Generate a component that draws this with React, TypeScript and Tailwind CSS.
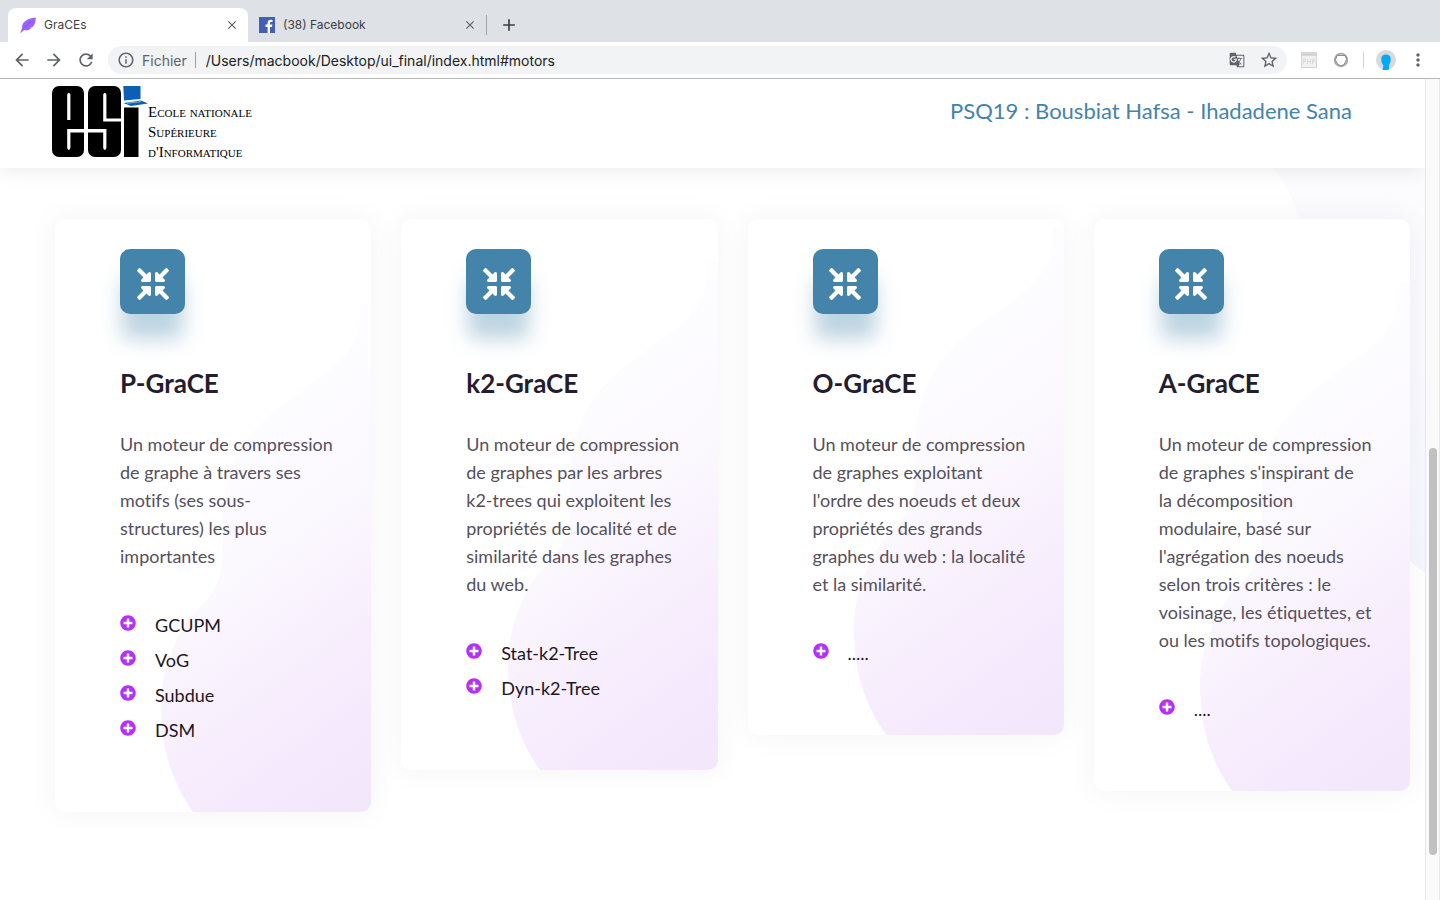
import React from "react";
import { FaCompressArrowsAlt, FaPlusCircle } from "react-icons/fa";
import { MdArrowBack, MdArrowForward, MdRefresh, MdClose, MdAdd, MdInfoOutline, MdStarBorder, MdMoreVert, MdGTranslate } from "react-icons/md";

type Engine = { title: string; lines: string[]; items: string[] };

const engines: Engine[] = [
  {
    title: "P-GraCE",
    lines: ["Un moteur de compression", "de graphe à travers ses", "motifs (ses sous-", "structures) les plus", "importantes"],
    items: ["GCUPM", "VoG", "Subdue", "DSM"],
  },
  {
    title: "k2-GraCE",
    lines: ["Un moteur de compression", "de graphes par les arbres", "k2-trees qui exploitent les", "propriétés de localité et de", "similarité dans les graphes", "du web."],
    items: ["Stat-k2-Tree", "Dyn-k2-Tree"],
  },
  {
    title: "O-GraCE",
    lines: ["Un moteur de compression", "de graphes exploitant", "l'ordre des noeuds et deux", "propriétés des grands", "graphes du web : la localité", "et la similarité."],
    items: ["....."],
  },
  {
    title: "A-GraCE",
    lines: ["Un moteur de compression", "de graphes s'inspirant de", "la décomposition", "modulaire, basé sur", "l'agrégation des noeuds", "selon trois critères : le", "voisinage, les étiquettes, et", "ou les motifs topologiques."],
    items: ["...."],
  },
];

function TabStrip() {
  return (
    <div className="flex h-[42px] items-end bg-[#dee1e6] pl-2 text-[12px] text-[#3c4043]">
      <div className="flex h-[34px] w-[240px] items-center rounded-t-lg bg-white pl-3 pr-2">
        <svg viewBox="0 0 16 16" className="size-4" aria-hidden="true">
          <path d="M.4 15.800C1.200 13.400 1.600 12.600 2.300 11.600C1 6.500 5 1.600 15.800.4C15.600 4.500 14.800 8 12.200 10.300L10 10.700L11 11.400C9 13.200 6.500 13.600 4 13L1.200 15.700z" fill="#9a63ff" />
          <path d="M2.500 12.500C5 9.500 7.500 7 11 4.800" fill="none" stroke="#7d45ec" strokeWidth=".8" />
        </svg>
        <span className="ml-2 flex-1">GraCEs</span>
        <button aria-label="Fermer GraCEs" className="grid size-4 place-items-center"><MdClose className="size-[14px] text-[#5f6368]" /></button>
      </div>
      <div className="flex h-[34px] w-[238px] items-center pl-[11px] pr-2">
        <svg viewBox="0 0 16 16" className="size-4" aria-hidden="true"><rect width="16" height="16" fill="#4460b5" /><path d="M11 16V10h2l.4-2.400H11V6.200c0-.8.3-1.200 1.200-1.200h1.300V2.900c-.4-.1-1-.2-1.700-.2-2 0-3.200 1.100-3.200 3.200v1.700H6.500V10h2.100v6z" fill="#fff" /></svg>
        <span className="ml-2 flex-1">(38) Facebook</span>
        <button aria-label="Fermer Facebook" className="grid size-4 place-items-center"><MdClose className="size-[14px] text-[#5f6368]" /></button>
      </div>
      <div className="flex h-[34px] items-center">
        <div className="h-5 w-px bg-[#a0a4a9]" />
        <button aria-label="Nouvel onglet" className="ml-3"><MdAdd className="size-5 text-[#3c4043]" /></button>
      </div>
    </div>
  );
}

function AddressBar() {
  return (
    <div className="flex h-[37px] items-center border-b border-[#b6b6b6] bg-white px-3 text-[#5f6368]">
      <button aria-label="Retour"><MdArrowBack className="size-5" /></button>
      <button aria-label="Avancer" className="ml-3"><MdArrowForward className="size-5" /></button>
      <button aria-label="Actualiser" className="ml-3"><MdRefresh className="size-5" /></button>
      <div className="ml-3 flex h-7 flex-1 items-center rounded-full bg-[#f1f3f4] px-2 text-[14px]">
        <MdInfoOutline className="mx-px size-[18px]" />
        <label htmlFor="url" className="ml-[6px]">Fichier</label>
        <span className="ml-2 mr-[10px] h-4 w-px bg-[#9aa0a6]" />
        <input id="url" defaultValue="/Users/macbook/Desktop/ui_final/index.html#motors" className="min-w-0 flex-1 bg-transparent text-[#202124] outline-none" />
        <button aria-label="Traduire"><MdGTranslate className="size-4" /></button>
        <button aria-label="Favori" className="ml-[14px]"><MdStarBorder className="size-5" /></button>
      </div>
      <svg viewBox="0 0 16 16" className="ml-[14px] size-4" aria-hidden="true"><rect x=".5" y=".5" width="15" height="15" fill="#f1f1f1" stroke="#d4d4d4" /><path d="M1 2.500h14" stroke="#cfcfcf" strokeWidth="2.500" /><path d="M2.500 12V7h2v2.500h-2M6.500 7v5M6.500 9.500h3M9.500 7v5M11.500 12V7h2v2.500h-2" fill="none" stroke="#dadada" /></svg>
      <svg viewBox="0 0 16 16" className="ml-4 size-4" aria-hidden="true"><circle cx="8" cy="8" r="6.300" fill="none" stroke="#a8a8a8" strokeWidth="1.800" /><path d="M4 3.500h8.500l1 4-2.500 5-3 1.500-3.500-2-2-4z" fill="none" stroke="#858585" strokeWidth=".9" /></svg>
      <span className="ml-[14px] h-4 w-px bg-[#cfd1d4]" />
      <svg viewBox="0 0 20 20" className="ml-3 size-5" aria-hidden="true"><circle cx="10" cy="10" r="10" fill="#d9d9d9" /><path d="M10 4.500c3.200 0 4.700 1.700 4.700 4.500 0 2.500-.5 4.500-1.700 6v4.300l-2 .7H6.500l1-4.500C5.700 13.500 5.300 11.500 5.300 9c0-2.800 1.500-4.500 4.700-4.500z" fill="#03a9f4" /></svg>
      <button aria-label="Menu" className="ml-3"><MdMoreVert className="size-5" /></button>
    </div>
  );
}

function Logo() {
  return (
    <a href="#home" className="flex text-black">
      <svg viewBox="0 0 96 74" className="h-[74px] w-[96px]" aria-hidden="true">
        <rect x="0" y="1" width="32" height="71" rx="7" />
        <rect x="36" y="1" width="33" height="71" rx="7" />
        <path d="M72 22.500h14.500V72H72z" />
        <path d="M15.200 35V9.500Q16.800 6 18.400 9.500V35zM15.200 44H34v3.500H18.400V63Q16.800 67 15.200 63zM51.200 36.500V9.500Q52.800 6 54.400 9.500V33.500H70v3zM34 44H54.400V63Q52.800 67 51.200 63V47.500H34z" fill="#fff" />
        <path d="M71.300 1H88.500V14L72 15.500zM71.500 18L89 15.500L96 18.500L79 21z" fill="#0b5fb4" />
        <path d="M75 18.300L89 16.600" stroke="#fff" strokeWidth=".5" />
      </svg>
      <span className="pt-[17px] font-['Liberation_Serif',serif] text-[15px] leading-5 [font-variant-caps:small-caps]">
        <span className="block">Ecole nationale</span>
        <span className="block">Supérieure</span>
        <span className="block">d'Informatique</span>
      </span>
    </a>
  );
}

function Blob({ id }: { id: string }) {
  return (
    <svg viewBox="0 0 211 508" className="absolute bottom-0 right-0 h-[508px] w-[211px]" aria-hidden="true">
      <defs>
        <linearGradient id={id} gradientUnits="userSpaceOnUse" x1="50" y1="130" x2="270" y2="430">
          <stop offset="0" stopColor="#fdfdff" />
          <stop offset=".35" stopColor="#fbf8fe" />
          <stop offset=".7" stopColor="#f7edfd" />
          <stop offset="1" stopColor="#f3e7fc" />
        </linearGradient>
      </defs>
      <path d="M211 0H200C201 22 200 45 160 74C137 90 115 104 100 121C74 145 66 175 63 203C62 225 65 250 60 270C54 293 40 302 30 313C12 340 3 365 1 395C0 430 6 470 33 508H211Z" fill={`url(#${id})`} />
    </svg>
  );
}

function EngineCard({ engine, index }: { engine: Engine; index: number }) {
  return (
    <article className="relative overflow-hidden rounded-[10px] bg-white pb-16 pl-[65px] pt-[30px] shadow-[0_0_30px_rgba(0,0,0,0.05)]">
      <Blob id={`blob-${index}`} />
      <div className="relative">
        <div className="grid size-[65px] place-items-center rounded-[10px] bg-[#4484aa] pt-1 shadow-[0_27px_20px_-2px_rgba(68,132,170,0.35)]">
          <FaCompressArrowsAlt className="size-8 text-white" />
        </div>
        <h2 className="mt-[53px] text-[26px] font-bold leading-8 text-[#231d2f]">{engine.title}</h2>
        <p className="mt-[31px] whitespace-nowrap text-[18px] leading-7 text-[#55505c]">
          {engine.lines.map((line) => <span key={line} className="block">{line}</span>)}
        </p>
        <ul className="mt-[38px] text-[18px] text-[#1d1724]">
          {engine.items.map((item) => (
            <li key={item} className="flex h-[35px] items-center">
              <FaPlusCircle className="mb-[6px] size-4 text-[#b530fa]" />
              <span className="ml-[19px]">{item}</span>
            </li>
          ))}
        </ul>
      </div>
    </article>
  );
}

export default function App() {
  return (
    <div className="flex min-h-screen flex-col bg-white font-[Inter,sans-serif]">
      <TabStrip />
      <AddressBar />
      <div className="flex flex-1">
        <div className="relative flex-1 overflow-hidden font-[Lato,sans-serif] [font-variant-ligatures:none]">
          <svg viewBox="0 0 160 420" className="absolute right-0 top-[84px] h-[420px] w-[160px]" aria-hidden="true">
            <defs><linearGradient id="page-blob" x1="0" y1="0" x2="0" y2="1"><stop offset="0" stopColor="#fcfcfe" /><stop offset="1" stopColor="#f6f6ff" /></linearGradient></defs>
            <path d="M0 0C12 6 24 26 33 51C55 110 65 200 90 290C105 350 125 385 160 410V0z" fill="url(#page-blob)" />
          </svg>
          <header className="relative flex h-[89px] justify-between bg-white pl-[52px] pr-[73px] pt-[6px] shadow-[0_0_20px_rgba(0,0,0,0.1)]">
            <Logo />
            <p className="pt-[10px] text-[22px] leading-8 text-[#4484aa]">PSQ19 : Bousbiat Hafsa - Ihadadene Sana</p>
          </header>
          <main id="motors" className="relative grid grid-cols-4 items-start gap-[30px] pb-20 pl-[55px] pr-[15px] pt-[51px]">
            {engines.map((engine, i) => <EngineCard key={engine.title} engine={engine} index={i} />)}
          </main>
        </div>
        <div className="w-[15px] border-x border-[#e8e8e8] bg-[#fafafa] pl-[3px] pt-[369px]">
          <div className="h-[407px] w-2 rounded-full bg-[#c1c1c1]" />
        </div>
      </div>
    </div>
  );
}
